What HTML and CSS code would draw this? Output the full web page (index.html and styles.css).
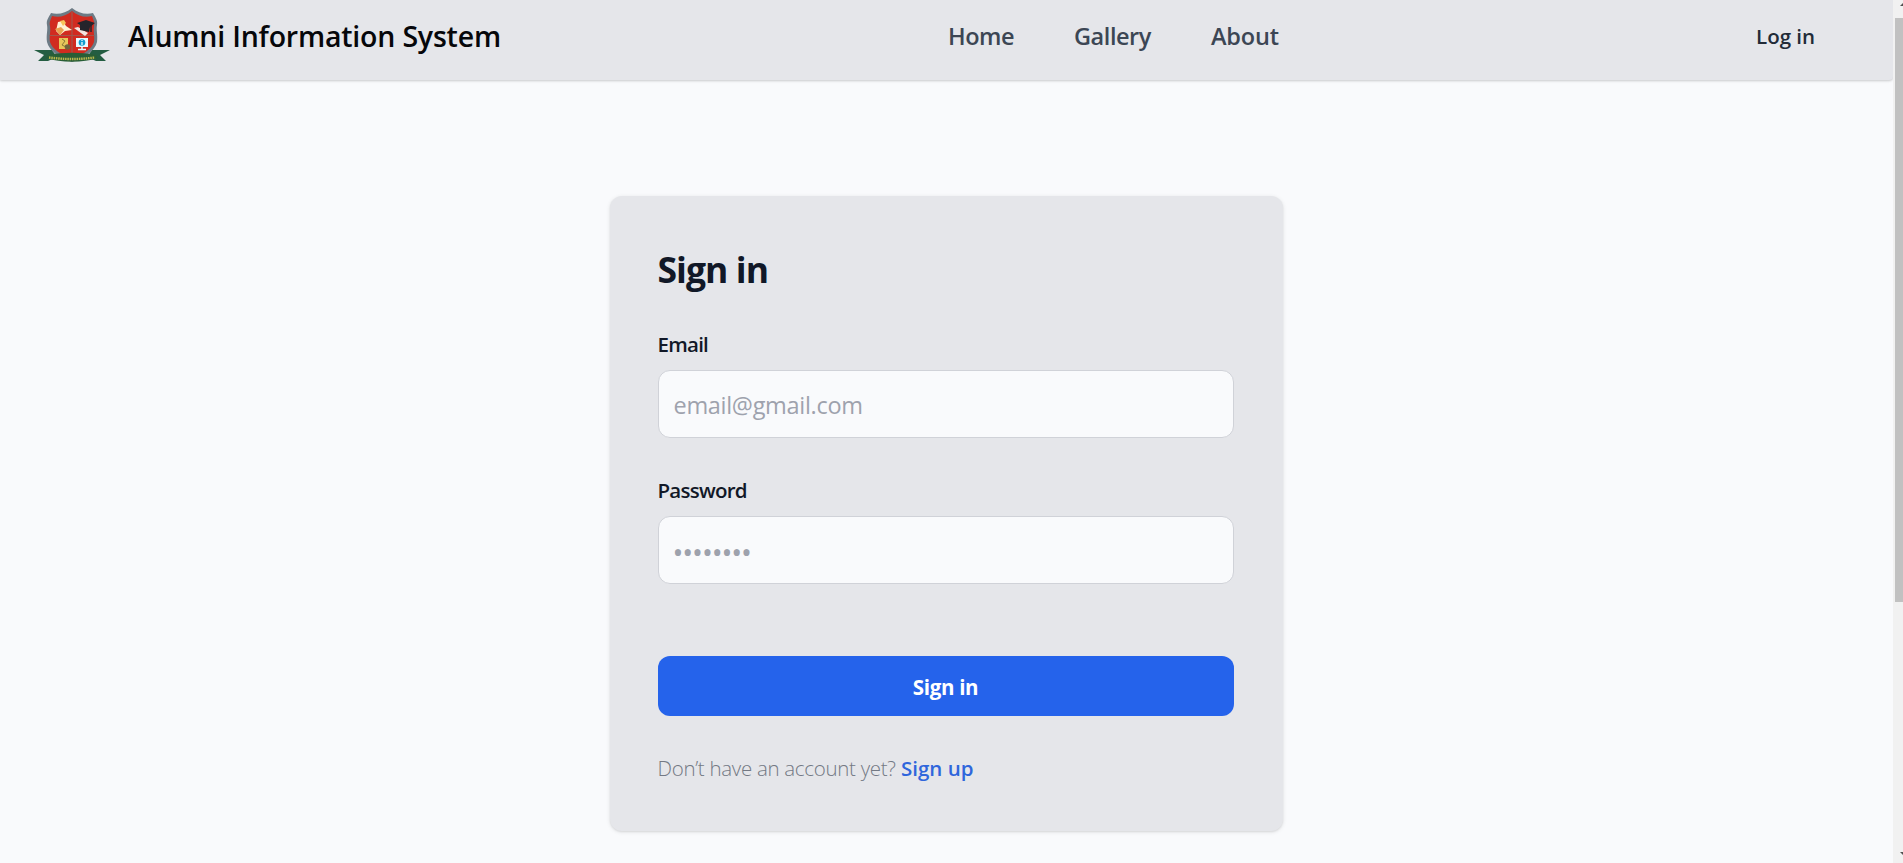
FILE: index.html
```html
<!DOCTYPE html>
<html lang="en">
<head>
<meta charset="utf-8">
<title>Alumni Information System</title>
<link rel="stylesheet" href="styles.css">
</head>
<body>
<div class="viewport">
  <div class="page">
    <header class="header">
      <a class="brand">
        <svg class="logo" viewBox="0 0 76 56" width="76" height="56">
          <path d="M0 42h18l5 7-9 4H4l6-6z" fill="#245d42"/>
          <path d="M76 42H58l-5 7 9 4h10l-6-6z" fill="#245d42"/>
          <path d="M38 0C32 5 24 7 17 5c-2 4-5 7-4 12 1 5-1 10 0 17 2 9 13 16 25 20 12-4 23-11 25-20 1-7-1-12 0-17 1-5-2-8-4-12-7 2-15 0-21-5z" fill="#6d7b85"/>
          <path d="M38 3C32 8 25 10 18 8c-1 3-3 6-2 10 1 6-1 10 0 16 2 7 11 13 22 16 11-3 20-9 22-16 1-6-1-10 0-16 1-4-1-7-2-10-7 2-14 0-20-5z" fill="#d12b20"/>
          <path d="M38 4v44M15.500 27.500h45" stroke="#a3564b" stroke-width="1.200"/>
          <path d="M24 14l5-1 3 5 6 4-7 1-5 4-4-4z" fill="#fff0d4"/>
          <path d="M21 21l6-2 3 3-4 5z" fill="#e9a150"/>
          <path d="M26 13l4-1 2 3-3 3z" fill="#f7c45c"/>
          <path d="M40 20l4-1 10 6-3 3z" fill="#f4e4e0"/>
          <path d="M43 15l9-3 9 3-5 4-1 5-9-2v-5z" fill="#24242b"/>
          <path d="M57 17v7" stroke="#24242b" stroke-width="1.500"/>
          <rect x="25" y="30" width="9" height="11" fill="#e7c65b"/>
          <path d="M28 31l3 2-3 4 4 2" fill="none" stroke="#8b7937"/>
          <circle cx="33.500" cy="39" r="2.800" fill="#71643d"/>
          <rect x="42" y="30" width="12" height="9" fill="#e8fbff"/>
          <path d="M48 39v3M44 41.500h8" stroke="#e8fbff" stroke-width="1.500"/>
          <circle cx="48" cy="34.500" r="3.300" fill="#129dce"/>
          <path d="M48 34v3M48 32v1" stroke="#fff" stroke-width="1.200"/>
          <path d="M14 47c16-3 32-3 48 0l2 3c-15 5-37 5-52 0z" fill="#285e36"/>
          <path d="M15 49.500q23 3 46 0" fill="none" stroke="#b9b64e" stroke-width="2.400" stroke-dasharray="1.500 .800"/>
        </svg>
        <span class="title">Alumni Information System</span>
      </a>
      <nav class="nav">
        <a class="home">Home</a>
        <a class="gallery">Gallery</a>
        <a class="about">About</a>
      </nav>
      <a class="login">Log in</a>
    </header>
    <main class="main">
      <form class="card">
        <h1 class="heading">Sign in</h1>
        <label class="label" for="email">Email</label>
        <input class="input" id="email" type="email" placeholder="email@gmail.com">
        <label class="label password-label" for="password">Password</label>
        <input class="input password" id="password" type="password" placeholder="••••••••">
        <button class="submit" type="button">Sign in</button>
        <p class="hint"><span class="question">Don’t have an account yet?</span><a class="signup">Sign up</a></p>
      </form>
    </main>
  </div>
  <aside class="scrollbar">
    <svg class="arrow" viewBox="0 0 10 18" width="10" height="18"><path d="M7 6l4-4v4z" fill="#505050"/></svg>
    <div class="thumb"></div>
    <svg class="arrow arrow-down" viewBox="0 0 10 18" width="10" height="18"><path d="M7 7h4v4z" fill="#505050"/></svg>
  </aside>
</div>
</body>
</html>
```
FILE: styles.css
```css
* { box-sizing: border-box; }
body { margin: 0; overflow: hidden; font-family: "Open Sans", "Noto Sans", sans-serif; }
.viewport { display: flex; height: 863px; background: #f9fafc; }
.page { flex: 1; min-width: 0; }
.header {
  display: flex; align-items: center; width: 1893px; height: 80px;
  padding: 0 78px 9px 34px; background: #e5e6ea;
  border-radius: 0 0 4px 0;
  box-shadow: 0 1px 3px rgba(0,0,0,.12), 0 1px 2px rgba(0,0,0,.08);
  white-space: nowrap;
}
.brand { display: flex; align-items: center; width: 914px; }
.logo { flex: none; margin-right: 18px; }
.title { color: #06070a; font-size: 28.500px; font-weight: 600; letter-spacing: -.200px; line-height: 40px; }
.nav { display: flex; flex: 1; color: #3c4654; font-size: 23.500px; font-weight: 600; line-height: 34px; }
.home { width: 126px; }
.gallery { width: 137px; }
.nav a { letter-spacing: -.450px; }
.nav .about { letter-spacing: -.200px; }
.login { width: 59px; color: #222b38; font-size: 20.500px; font-weight: 600; line-height: 30px; letter-spacing: 0; }
.main { display: flex; justify-content: center; padding: 116px 1px 0 0; }
.card {
  display: flex; flex-direction: column; width: 673px; height: 635px; padding: 48px 49px 48px 48px;
  background: #e5e6ea; border-radius: 12px;
  box-shadow: 0 1px 4px rgba(0,0,0,.1), 0 1px 2px rgba(0,0,0,.07);
}
.heading { margin: 0 0 35px; color: #111827; font-size: 35.500px; font-weight: 700; line-height: 50px; letter-spacing: -.950px; }
.label { margin-bottom: 11px; color: #111827; font-size: 20.500px; font-weight: 600; line-height: 30px; letter-spacing: -.750px; }
.password-label { margin-top: 37px; }
.input {
  width: 100%; height: 68px; padding: 2px 15px 0; border: 1px solid #d0d2d8; border-radius: 12px;
  background: #f9fafc; font-family: "Open Sans", "Noto Sans", sans-serif; font-size: 23.500px; letter-spacing: -.300px;
}
.input::placeholder { color: #9ea2ad; opacity: 1; }
.password { padding-left: 14px; font-size: 29px; }
.password::placeholder { letter-spacing: -1.100px; }
.submit {
  height: 60px; margin-top: 72px; padding: 2px 0 0; border: 0; border-radius: 12px; background: #2563eb; color: #fff;
  font-family: "Open Sans", "Noto Sans", sans-serif; font-size: 20.500px; font-weight: 700; letter-spacing: -.300px;
}
.hint { display: flex; margin: 37px 0 0; color: #737984; font-size: 20.500px; font-weight: 300; line-height: 30px; white-space: nowrap; }
.question { width: 243.500px; letter-spacing: -.300px; }
.signup { color: #2f66dc; font-weight: 600; letter-spacing: 0; }
.scrollbar { display: flex; flex-direction: column; width: 10px; padding-left: 2px; background: #f1f1f1; }
.arrow { flex: none; margin-left: -2px; }
.thumb { height: 584px; background: #c1c1c1; }
.arrow-down { margin-top: auto; }
```
